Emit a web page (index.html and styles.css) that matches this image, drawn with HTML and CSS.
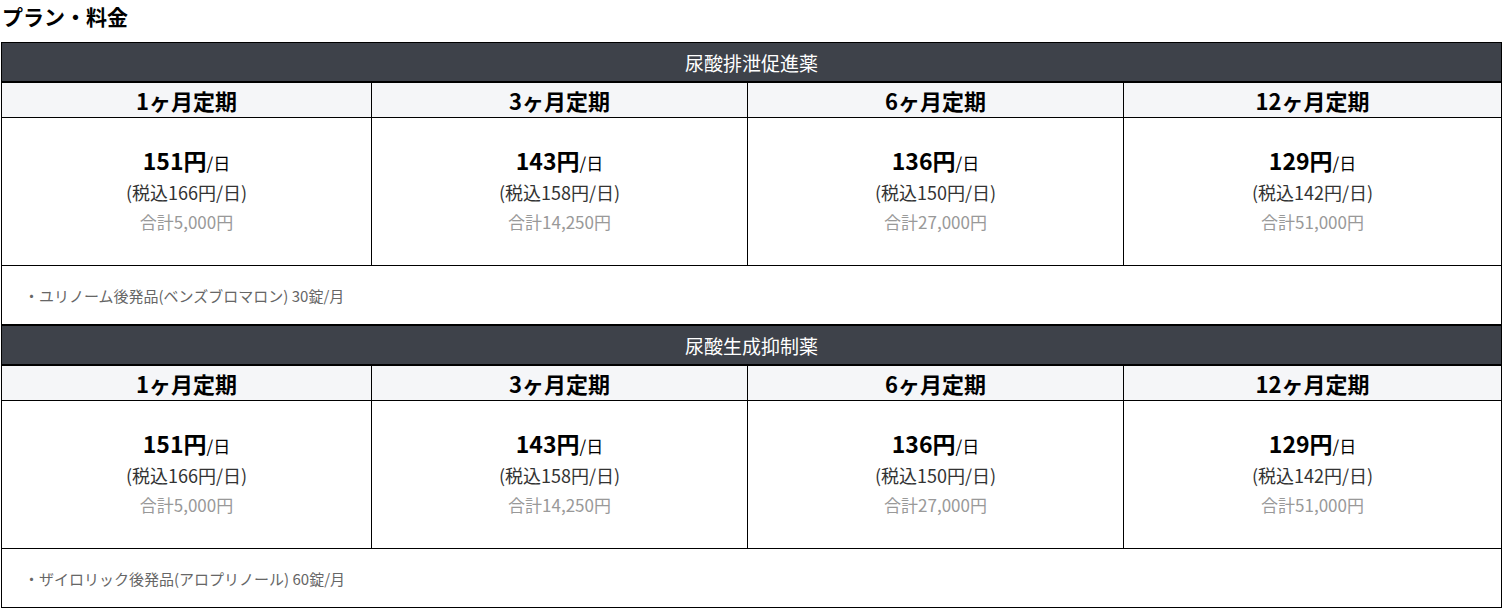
FILE: index.html
```html
<!DOCTYPE html>
<html lang="ja">
<head>
<meta charset="utf-8">
<link rel="stylesheet" href="styles.css">
</head>
<body>
<h2 class="title">プラン・料金</h2>
<div class="plans">
<table class="plan">
  <colgroup><col class="c1"><col class="c2"><col class="c3"><col class="c4"></colgroup>
  <tr><th class="cat" colspan="4">尿酸排泄促進薬</th></tr>
  <tr class="terms"><th>1ヶ月定期</th><th>3ヶ月定期</th><th>6ヶ月定期</th><th>12ヶ月定期</th></tr>
  <tr class="prices">
    <td><div class="price"><b>151円</b>/日</div><div class="tax">(税込166円/日)</div><div class="total">合計5,000円</div></td>
    <td><div class="price"><b>143円</b>/日</div><div class="tax">(税込158円/日)</div><div class="total">合計14,250円</div></td>
    <td><div class="price"><b>136円</b>/日</div><div class="tax">(税込150円/日)</div><div class="total">合計27,000円</div></td>
    <td><div class="price"><b>129円</b>/日</div><div class="tax">(税込142円/日)</div><div class="total">合計51,000円</div></td>
  </tr>
  <tr class="note"><td colspan="4">・ユリノーム後発品(ベンズブロマロン) 30錠/月</td></tr>
</table>
<table class="plan">
  <colgroup><col class="c1"><col class="c2"><col class="c3"><col class="c4"></colgroup>
  <tr><th class="cat" colspan="4">尿酸生成抑制薬</th></tr>
  <tr class="terms"><th>1ヶ月定期</th><th>3ヶ月定期</th><th>6ヶ月定期</th><th>12ヶ月定期</th></tr>
  <tr class="prices">
    <td><div class="price"><b>151円</b>/日</div><div class="tax">(税込166円/日)</div><div class="total">合計5,000円</div></td>
    <td><div class="price"><b>143円</b>/日</div><div class="tax">(税込158円/日)</div><div class="total">合計14,250円</div></td>
    <td><div class="price"><b>136円</b>/日</div><div class="tax">(税込150円/日)</div><div class="total">合計27,000円</div></td>
    <td><div class="price"><b>129円</b>/日</div><div class="tax">(税込142円/日)</div><div class="total">合計51,000円</div></td>
  </tr>
  <tr class="note"><td colspan="4">・ザイロリック後発品(アロプリノール) 60錠/月</td></tr>
</table>
</div>
</body>
</html>
```
FILE: styles.css
```css
html, body {
  margin: 0;
  padding: 0;
  background: #fff;
  font-family: "Noto Sans CJK JP", "Noto Sans", sans-serif;
  color: #000;
}
.title {
  margin: 0;
  padding: 2px 0 0 2px;
  height: 42px;
  box-sizing: border-box;
  font-size: 21px;
  line-height: 28px;
  font-weight: bold;
}
.plans {
  padding-left: 1px;
  width: 1500px;
}
.plan {
  width: 1500px;
  border-collapse: collapse;
  border: 1px solid #000;
  table-layout: fixed;
}
.c1 { width: 370px; }
.c2 { width: 376px; }
.c3 { width: 376px; }
.c4 { width: 378px; }
.plan th, .plan td {
  border: 1px solid #000;
  padding: 0;
  text-align: center;
}
.cat {
  background: #3e424a;
  color: #fff;
  font-weight: normal;
  font-size: 19px;
  height: 38px;
  line-height: 37px;
  border-bottom-width: 2px !important;
}
.terms th {
  background: #f5f6f8;
  font-size: 22px;
  font-weight: bold;
  height: 34px;
  line-height: 34px;
}
.prices td {
  height: 147px;
  vertical-align: middle;
}
.price {
  font-size: 17px;
  line-height: 30px;
  color: #000;
}
.price b {
  font-size: 23px;
  font-weight: bold;
}
.tax {
  font-size: 18px;
  line-height: 29px;
  color: #333;
}
.total {
  font-size: 17px;
  line-height: 30px;
  color: #999;
  padding-bottom: 2px;
}
.note td {
  height: 58px;
  text-align: left;
  padding-left: 22px;
  font-size: 15px;
  color: #666;
}
```
